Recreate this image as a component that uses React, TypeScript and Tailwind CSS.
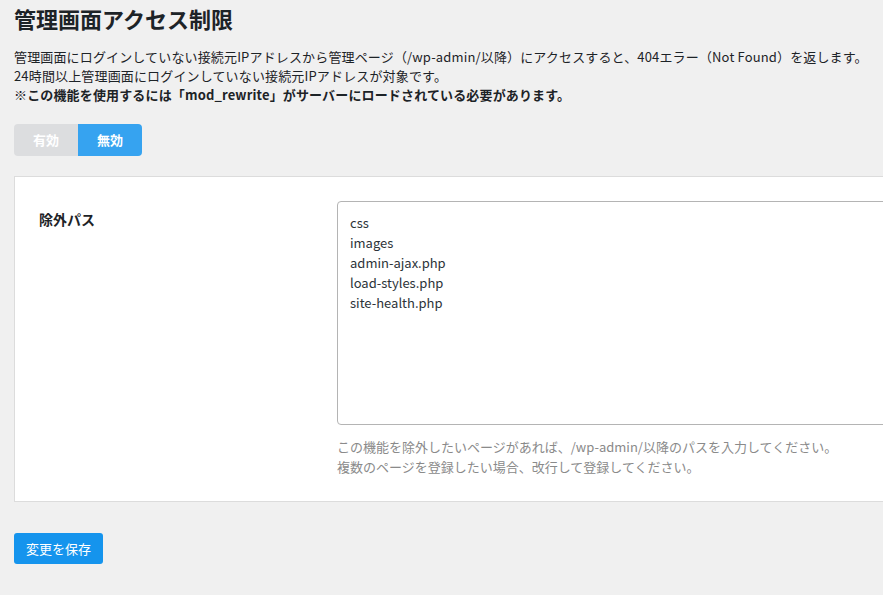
import { useState } from 'react'

const defaultPaths = ['css', 'images', 'admin-ajax.php', 'load-styles.php', 'site-health.php'].join('\n')

export default function App() {
  const [enabled, setEnabled] = useState(false)
  const [paths, setPaths] = useState(defaultPaths)

  return (
    <div className="min-h-screen w-full overflow-hidden bg-[#f0f0f0] text-[#1d2327] font-['Noto_Sans_CJK_JP',sans-serif]">
      <div className="pl-[14px] pt-[2px]">
        <h1 className="text-[22px] font-bold leading-[32px]">管理画面アクセス制限</h1>

        <div className="mt-[13px] text-[13px] leading-[19px] tracking-[0.15px]">
          <p>管理画面にログインしていない接続元IPアドレスから管理ページ（/wp-admin/以降）にアクセスすると、404エラー（Not Found）を返します。</p>
          <p>24時間以上管理画面にログインしていない接続元IPアドレスが対象です。</p>
          <p className="font-bold">※この機能を使用するには「mod_rewrite」がサーバーにロードされている必要があります。</p>
        </div>

        {/* toggle */}
        <div className="mt-[20px] flex w-[128px] h-[32px] rounded-[4px] overflow-hidden text-[13px] font-bold text-white">
          <button
            onClick={() => setEnabled(true)}
            className={`flex-1 ${enabled ? 'bg-[#36a3f0]' : 'bg-[#dcdddf]'}`}
          >
            有効
          </button>
          <button
            onClick={() => setEnabled(false)}
            className={`flex-1 ${!enabled ? 'bg-[#36a3f0]' : 'bg-[#dcdddf]'}`}
          >
            無効
          </button>
        </div>

        {/* settings card */}
        <div className="mt-[20px] w-[900px] bg-white border border-[#dcdcdc] pl-[24px] pt-[24px] pb-[24px]">
          <div className="flex">
            <div className="w-[298px] pt-[8px] text-[14px] font-bold leading-[20px]">除外パス</div>
            <div className="flex-1">
              <textarea
                value={paths}
                onChange={(e) => setPaths(e.target.value)}
                className="block w-full h-[224px] resize-none rounded-[4px] border border-[#b4b4b4] px-[12px] pt-[11px] pb-[12px] text-[13px] leading-[20px] text-[#2c3338] focus:outline-none"
              />
              <div className="mt-[12px] text-[13px] leading-[20px] text-[#8a8a8a]">
                <p>この機能を除外したいページがあれば、/wp-admin/以降のパスを入力してください。</p>
                <p>複数のページを登録したい場合、改行して登録してください。</p>
              </div>
            </div>
          </div>
        </div>

        <button className="mt-[31px] h-[31px] px-[12px] rounded-[3px] bg-[#1594ed] text-white text-[13px]">
          変更を保存
        </button>
      </div>
    </div>
  )
}
